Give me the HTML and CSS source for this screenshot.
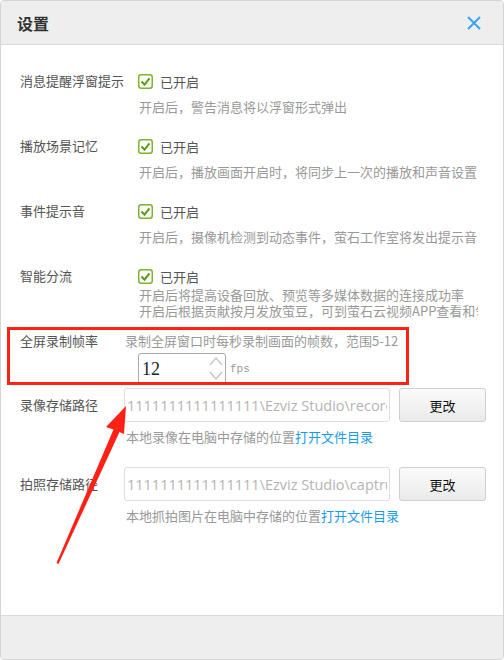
FILE: index.html
```html
<!DOCTYPE html>
<html>
<head>
  <meta charset="utf-8">
  <title>设置</title>
  <link rel="stylesheet" href="styles.css">
</head>
<body>
  <div class="dialog">
    <div class="header">
      <span class="title">设置</span>
      <svg class="close" width="14" height="14" viewBox="0 0 14 14"><path d="M1 1L13 13M13 1L1 13" stroke="#3aa3f2" stroke-width="2"/></svg>
    </div>

    <div class="body">
      <div class="opt">
        <div class="label">消息提醒浮窗提示</div>
        <div class="ctrl">
          <div class="line">
            <svg class="check" viewBox="0 0 15 15"><rect x="0.75" y="0.75" width="13.5" height="13.5" rx="2.5" fill="#fff" stroke="#7db32f" stroke-width="1.5"/><path d="M3.5 7.5l3 3.2 5-6.4" fill="none" stroke="#5a9b17" stroke-width="2"/></svg>
            <span>已开启</span>
          </div>
          <div class="desc">开启后，警告消息将以浮窗形式弹出</div>
        </div>
      </div>

      <div class="opt">
        <div class="label">播放场景记忆</div>
        <div class="ctrl">
          <div class="line">
            <svg class="check" viewBox="0 0 15 15"><rect x="0.75" y="0.75" width="13.5" height="13.5" rx="2.5" fill="#fff" stroke="#7db32f" stroke-width="1.5"/><path d="M3.5 7.5l3 3.2 5-6.4" fill="none" stroke="#5a9b17" stroke-width="2"/></svg>
            <span>已开启</span>
          </div>
          <div class="desc">开启后，播放画面开启时，将同步上一次的播放和声音设置</div>
        </div>
      </div>

      <div class="opt">
        <div class="label">事件提示音</div>
        <div class="ctrl">
          <div class="line">
            <svg class="check" viewBox="0 0 15 15"><rect x="0.75" y="0.75" width="13.5" height="13.5" rx="2.5" fill="#fff" stroke="#7db32f" stroke-width="1.5"/><path d="M3.5 7.5l3 3.2 5-6.4" fill="none" stroke="#5a9b17" stroke-width="2"/></svg>
            <span>已开启</span>
          </div>
          <div class="desc">开启后，摄像机检测到动态事件，萤石工作室将发出提示音</div>
        </div>
      </div>

      <div class="opt opt-last">
        <div class="label">智能分流</div>
        <div class="ctrl">
          <div class="line">
            <svg class="check" viewBox="0 0 15 15"><rect x="0.75" y="0.75" width="13.5" height="13.5" rx="2.5" fill="#fff" stroke="#7db32f" stroke-width="1.5"/><path d="M3.5 7.5l3 3.2 5-6.4" fill="none" stroke="#5a9b17" stroke-width="2"/></svg>
            <span>已开启</span>
          </div>
          <div class="desc desc-multi">开启后将提高设备回放、预览等多媒体数据的连接成功率<br>开启后根据贡献按月发放萤豆，可到萤石云视频APP查看和领取</div>
        </div>
      </div>

      <div class="fps">
        <div class="label">全屏录制帧率</div>
        <div class="ctrl">
          <div class="fps-desc">录制全屏窗口时每秒录制画面的帧数，范围5-12</div>
          <div class="spin-row">
            <div class="spinner">
              <span class="spin-val">12</span>
              <svg width="14" height="26" viewBox="0 0 14 26"><path d="M1 9L7 2l6 7M1 16l6 7 6-7" fill="none" stroke="#c4c4c4" stroke-width="1.2"/></svg>
            </div>
            <span class="unit">fps</span>
          </div>
        </div>
      </div>

      <div class="path-block">
        <div class="path-row">
          <div class="label path-label">录像存储路径</div>
          <input class="field" type="text" value="1111111111111111\Ezviz Studio\record\" readonly>
          <button class="btn">更改</button>
        </div>
        <div class="path-desc">本地录像在电脑中存储的位置<span class="link">打开文件目录</span></div>
      </div>

      <div class="path-block">
        <div class="path-row">
          <div class="label path-label">拍照存储路径</div>
          <input class="field" type="text" value="1111111111111111\Ezviz Studio\captrue\" readonly>
          <button class="btn">更改</button>
        </div>
        <div class="path-desc">本地抓拍图片在电脑中存储的位置<span class="link">打开文件目录</span></div>
      </div>
    </div>

    <div class="footer"></div>

    <!-- annotation overlays -->
    <div class="mark"></div>
    <svg class="arrow" width="502" height="658" viewBox="1 1 502 658">
      <polygon points="126,406 124,434 119.5,432 58.5,564 56.5,563 113.5,429.5 106,427" fill="#ff2116"/>
    </svg>
  </div>
</body>
</html>
```

FILE: styles.css
```css
body {
  margin: 0;
  font-family: "Noto Sans CJK SC", sans-serif;
  background: #fff;
}

.dialog {
  position: relative;
  width: 504px;
  height: 660px;
  box-sizing: border-box;
  border: 1px solid #d4d4d4;
  border-radius: 4px;
  display: flex;
  flex-direction: column;
  overflow: hidden;
  background: #fff;
}

.header {
  flex: none;
  height: 43px;
  border-bottom: 1px solid #dadada;
  background: #eeeeee;
  display: flex;
  align-items: center;
  justify-content: space-between;
  padding: 0 22px 0 16px;
}

.title {
  font-size: 16px;
  font-weight: bold;
  line-height: 20px;
  color: #333;
}

.body {
  flex: 1;
  padding: 26px 25px 0 19px;
  overflow: hidden;
}

.opt {
  display: grid;
  grid-template-columns: 119px 1fr;
  margin-bottom: 19px;
}

.opt-last {
  margin-bottom: 12px;
}

.label {
  font-size: 13px;
  line-height: 20px;
  color: #555;
}

.ctrl {
  min-width: 0;
}

.line {
  display: flex;
  align-items: center;
  height: 20px;
  font-size: 13px;
  color: #555;
}

.check {
  width: 15px;
  height: 15px;
  margin: 0 7px 0 -1px;
}

.desc {
  margin-top: 6px;
  font-size: 13px;
  line-height: 20px;
  color: #999;
  white-space: nowrap;
  overflow: hidden;
}

.desc-multi {
  margin-top: 1px;
  line-height: 16px;
}

.fps {
  display: grid;
  grid-template-columns: 105px 1fr;
}

.fps-desc {
  font-size: 13px;
  line-height: 20px;
  color: #999;
}

.spin-row {
  display: flex;
  align-items: center;
  margin-top: 2px;
  padding-left: 13px;
}

.spinner {
  width: 88px;
  height: 32px;
  box-sizing: border-box;
  border: 1px solid #a9a9a9;
  border-radius: 3px;
  display: flex;
  align-items: center;
  justify-content: space-between;
  padding: 0 2px 0 3px;
}

.spin-val {
  font-family: "Liberation Serif", serif;
  font-size: 18px;
  color: #222;
}

.unit {
  margin-left: 4px;
  font-family: "Liberation Mono", monospace;
  font-size: 11px;
  color: #999;
}

.path-block {
  margin-top: 3px;
}

.path-block + .path-block {
  margin-top: 20px;
}

.path-row {
  display: flex;
  align-items: center;
}

.path-label {
  width: 104px;
  flex: none;
}

.field {
  flex: none;
  width: 266px;
  height: 34px;
  box-sizing: border-box;
  border: 1px solid #dedede;
  border-radius: 3px;
  padding: 0 2px;
  font-family: "Open Sans", sans-serif;
  font-size: 14.5px;
  color: #b4b4b4;
  background: #fff;
  outline: none;
}

.btn {
  flex: none;
  margin-left: 9px;
  width: 87px;
  height: 34px;
  border: 1px solid #cfcfcf;
  border-radius: 3px;
  background: linear-gradient(#fbfbfb, #eaeaea);
  font-family: "Noto Sans CJK SC", sans-serif;
  font-size: 13px;
  color: #111;
}

.path-desc {
  margin: 5px 0 0 106px;
  font-size: 13px;
  line-height: 20px;
  color: #999;
}

.link {
  color: #1a9be8;
}

.footer {
  flex: none;
  height: 43px;
  border-top: 1px solid #dadada;
  background: #eeeeee;
}

.mark {
  position: absolute;
  left: 6px;
  top: 326px;
  width: 402px;
  height: 58px;
  box-sizing: border-box;
  border: 3px solid #ff2116;
}

.arrow {
  position: absolute;
  left: 0;
  top: 0;
  pointer-events: none;
}
```
